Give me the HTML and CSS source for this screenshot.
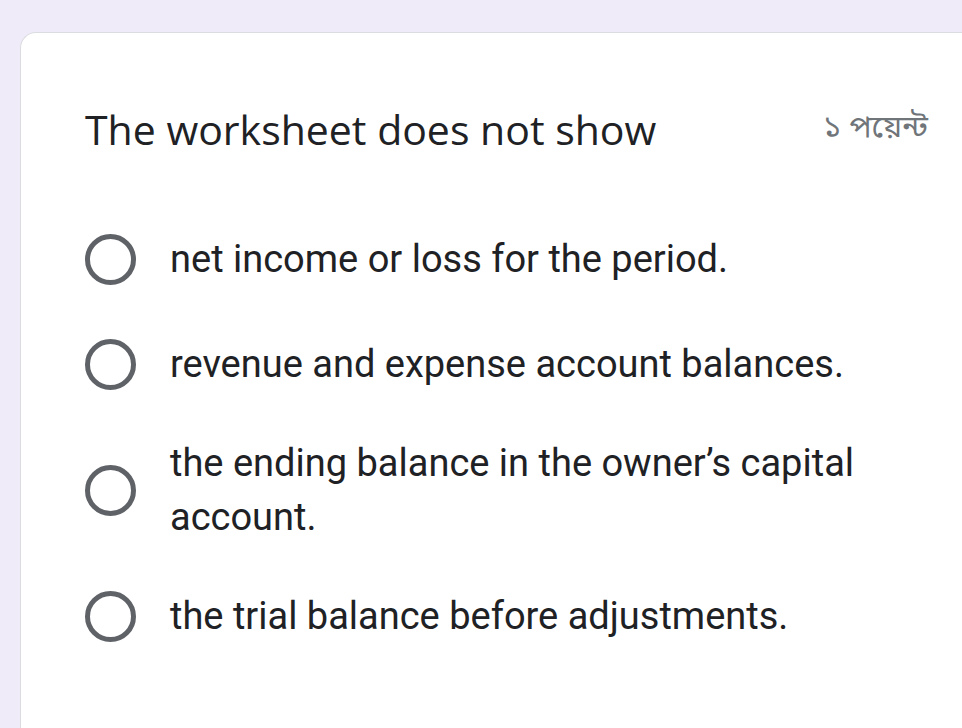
FILE: index.html
```html
<!DOCTYPE html>
<html lang="en">
<head>
<meta charset="utf-8">
<link rel="stylesheet" href="styles.css">
</head>
<body>
<div class="card">
  <div class="header">
    <div class="title">The worksheet does not show</div>
    <div class="points">১ পয়েন্ট</div>
  </div>
  <div class="options">
    <div class="option"><span class="radio"></span><span class="label">net income or loss for the period.</span></div>
    <div class="option"><span class="radio"></span><span class="label">revenue and expense account balances.</span></div>
    <div class="option"><span class="radio"></span><span class="label">the ending balance in the owner’s capital account.</span></div>
    <div class="option"><span class="radio"></span><span class="label">the trial balance before adjustments.</span></div>
  </div>
</div>
</body>
</html>
```
FILE: styles.css
```css
html, body {
  margin: 0;
  padding: 0;
  background: #f0ebf8;
  overflow: hidden;
  height: 728px;
}
body {
  padding: 32px 0 0 20px;
  box-sizing: border-box;
}
.card {
  background: #fff;
  border: 1px solid #dadce0;
  border-right: none;
  border-radius: 16px 0 0 16px;
  height: 710px;
  box-sizing: border-box;
  padding: 68px 34px 0 64px;
  font-family: Roboto, "Noto Sans", sans-serif;
  color: #202124;
}
.header {
  display: flex;
  justify-content: space-between;
  align-items: center;
}
.title {
  font-family: "Open Sans", Roboto, sans-serif;
  font-size: 41px;
  line-height: 56px;
  color: #202124;
}
.points {
  font-family: "Noto Sans Bengali", "Noto Sans", sans-serif;
  font-size: 31px;
  color: #70757a;
}
.options {
  margin-top: 69px;
  display: flex;
  flex-direction: column;
  gap: 39px;
}
.option {
  display: flex;
  align-items: center;
  gap: 34px;
  min-height: 66px;
}
.radio {
  flex: none;
  width: 51px;
  height: 51px;
  box-sizing: border-box;
  border: 5px solid #5f6368;
  border-radius: 50%;
}
.label {
  font-size: 38px;
  line-height: 54px;
  max-width: 720px;
  color: #202124;
}
```
